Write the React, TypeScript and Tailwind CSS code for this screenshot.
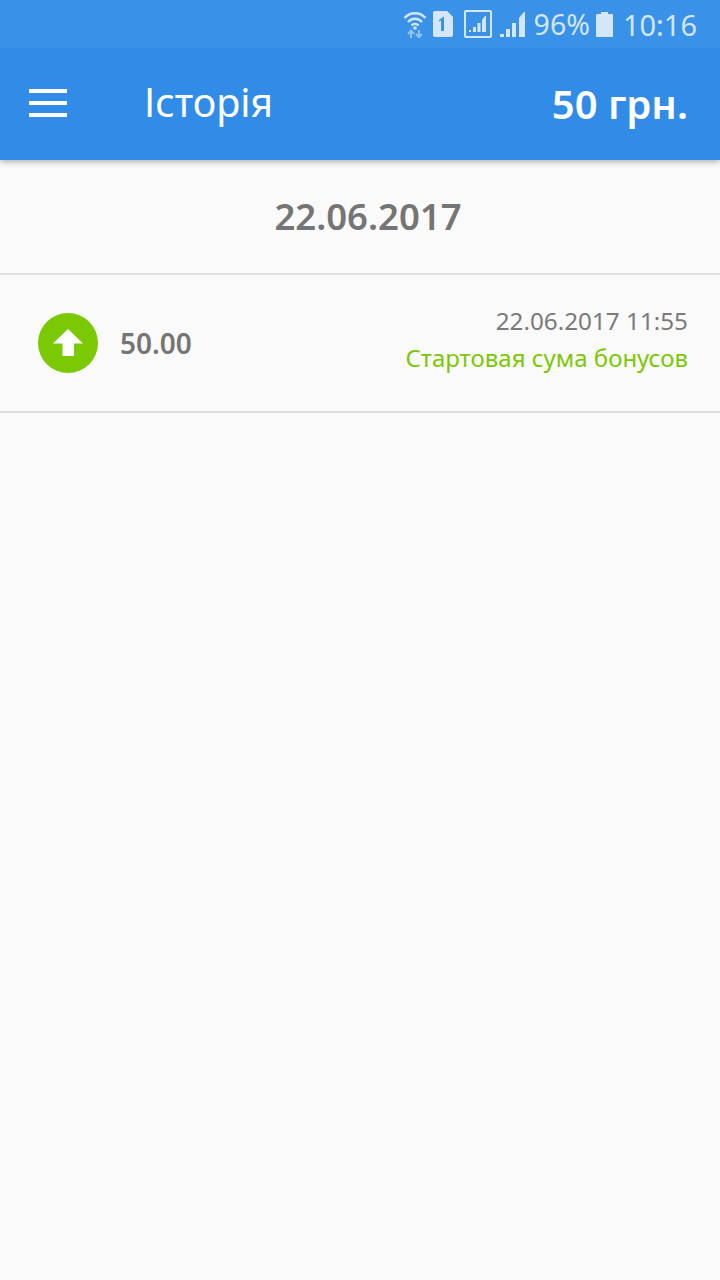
export default function App() {
  return (
    <div className="flex h-[1280px] w-[720px] flex-col overflow-hidden bg-[#fafafa] font-['Noto_Sans','Open_Sans',sans-serif]">
      <header className="relative z-10 bg-[#318ce7] shadow-[0_2px_6px_rgba(0,0,0,0.3)]">
        <div className="flex h-12 items-center justify-end bg-[#3a92e8] pr-[23px] text-[#d3e6fa]">
          <svg width="24" height="28" viewBox="0 0 24 28" className="mr-[6px]" fill="none" stroke="#d3e6fa">
            <path d="M1.500 8 A14 14 0 0 1 22.500 8" strokeWidth="2.500" />
            <path d="M5 12 A9 9 0 0 1 19 12" strokeWidth="2.500" />
            <path d="M8.500 15.500 A5 5 0 0 1 15.500 15.500" strokeWidth="2.500" />
            <circle cx="12" cy="18" r="1.800" fill="#d3e6fa" stroke="none" />
            <path d="M8 28V21M5 24l3-3.500 3 3.500M16 20v7M13 24l3 3.500 3-3.500" strokeWidth="2" stroke="#8fc1f1" />
          </svg>
          <svg width="20" height="26" viewBox="0 0 20 26" className="mr-[11px]">
            <path d="M2 0H14L20 6V24a2 2 0 0 1-2 2H2a2 2 0 0 1-2-2V2a2 2 0 0 1 2-2Z" fill="#d3e6fa" />
            <path d="M6 9l5-3.500V20H8V9.500L6 10.500Z" fill="#3a92e8" />
          </svg>
          <svg width="28" height="28" viewBox="0 0 28 28" className="mr-[8px]">
            <rect x="1" y="1" width="26" height="26" rx="1" fill="none" stroke="#d3e6fa" strokeWidth="2" />
            <path d="M5 22h2v-2H5ZM9 22h3v-5H9ZM13.500 22h3v-9h-3ZM18 22h4V6h-1l-3 4Z" fill="#d3e6fa" />
          </svg>
          <svg width="25" height="25" viewBox="0 0 25 25" className="mr-[9px]">
            <path d="M0 25h4v-3H0ZM6 25h4v-8H6ZM12 25h4V11h-4ZM19 25h6V0h-1l-5 6Z" fill="#d3e6fa" />
          </svg>
          <span className="text-[28.500px] leading-none">96%</span>
          <svg width="17" height="25" viewBox="0 0 17 25" className="ml-[6px] mr-[10px]">
            <path d="M5 2V0h7v2h4a1 1 0 0 1 1 1v22H0V3a1 1 0 0 1 1-1Z" fill="#d3e6fa" />
          </svg>
          <span className="text-[29px] leading-none">10:16</span>
        </div>
        <div className="flex h-28 items-center">
          <div className="ml-[29px] flex w-[38px] flex-col gap-[8px] pb-[2px]">
            <div className="h-1 bg-white" />
            <div className="h-1 bg-white" />
            <div className="h-1 bg-white" />
          </div>
          <span className="ml-[77px] pb-[2px] text-[39.500px] font-normal leading-none text-white">Історія</span>
          <span className="ml-auto mr-[32px] pb-[1px] text-[40px] font-semibold leading-none text-white">50 грн.</span>
        </div>
      </header>
      <div className="flex h-[115px] items-center justify-center border-b-2 border-[#e0e0e0] pl-4 text-[36.500px] font-semibold text-[#757575]">
        22.06.2017
      </div>
      <div className="flex h-[138px] items-center border-b-2 border-[#e0e0e0] pl-[38px] pr-[32px]">
        <div className="flex h-[60px] w-[60px] items-center justify-center rounded-full bg-[#7bc804]">
          <svg width="30" height="28" viewBox="0 0 30 28">
            <path d="M15 0 L30 14.500 H21 V27 H9.500 V14.500 H0 Z" fill="white" />
          </svg>
        </div>
        <span className="ml-[22px] text-[28px] font-semibold leading-none text-[#757575]">50.00</span>
        <div className="ml-auto flex flex-col items-end gap-[6px] pb-[9px]">
          <span className="text-[24.250px] leading-[31px] text-[#7a7a7a]">22.06.2017 11:55</span>
          <span className="text-[24px] leading-[31px] text-[#7bc804]">Стартовая сума бонусов</span>
        </div>
      </div>
    </div>
  );
}
